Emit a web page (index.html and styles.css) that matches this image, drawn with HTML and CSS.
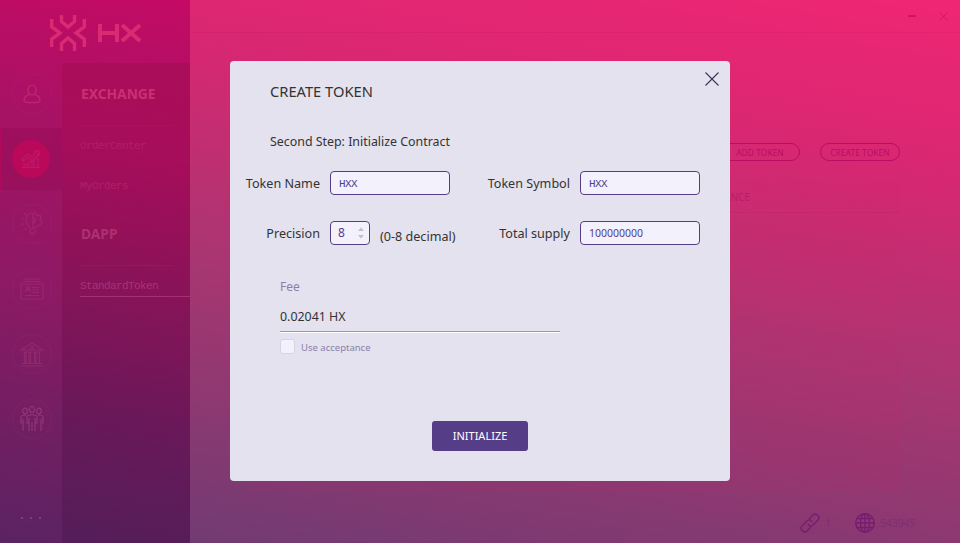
FILE: index.html
```html
<!DOCTYPE html>
<html lang="en">
<head>
<meta charset="utf-8">
<title>HX Wallet</title>
<link rel="stylesheet" href="styles.css">
</head>
<body>
<div class="app">
  <aside class="sidebar">
    <div class="brand">
      <svg class="brand-mark" width="36" height="36" viewBox="0 0 36 36"><path d="M11.500 0v6.500l6.500 5.500 6.500-5.500V0M11.500 36v-7.500l6.500-5.500 6.500 5.500V36M1.700 4v8L10 18l-8.300 6v8M34.300 4v8L26 18l8.300 6v8"/></svg>
      <svg class="brand-name" width="44" height="18" viewBox="0 0 44 18"><path d="M2 0v18M19 0v18M2 9h17M24 1l18 16M42 1L24 17"/></svg>
    </div>
    <div class="menus">
      <nav class="rail">
        <div class="rail-item user"><span class="disc"><svg width="18" height="20" viewBox="0 0 18 20"><ellipse cx="9" cy="6" rx="4" ry="5"/><path d="M6 10.500C3 12 1 13 1 16.500c0 3 16 3 16 0 0-3.500-2-4.500-5-6"/></svg></span></div>
        <div class="rail-item active"><span class="disc"><svg width="20" height="20" viewBox="0 0 20 20"><path d="M.5 18.500h19M3 18v-3h3v3M8 18v-5h3v5M13 18V9h4v9M1 10l6-5 4 3 4-5-2-1h5v5l-1-2-6 7-4-4-5 4z"/></svg></span></div>
        <div class="rail-item"><span class="disc"><svg width="22" height="26" viewBox="0 0 22 26"><path d="M9 18c0-3-4-4-4-9s3-7 7-7h3l1 3 3-1 1 3-1 2 2 2-2 3-3 1c0 2-3 1-3 3zM9 19v3h5v-3M10 24h3M12 2v16M12 7c3 0 3 5 0 5M3 2l2 2M0 8h3M0 13h3M4 19l2-2"/></svg></span></div>
        <div class="rail-item"><span class="disc"><svg width="24" height="22" viewBox="0 0 24 22"><path d="M1 6h22v15H1zM3 3.500h18M4 1h16M5.500 14c0-4 5-4 5 0M7 9h2.500v3H7zM12 9.500h7M12 12h7M12 14.500h7M5 17.500h14"/></svg></span></div>
        <div class="rail-item"><span class="disc"><svg width="24" height="25" viewBox="0 0 24 25"><path d="M1 8l11-7 11 7zM3 10h18M4.500 10v11M9 10v11M14.500 10v11M19.500 10v11" /><path d="M2 21.500h20M0 24h24M12 4a1.500 1.500 0 100 3 1.500 1.500 0 000-3M6 10v11M10.500 10v11M16 10v11"/></svg></span></div>
        <div class="rail-item people"><span class="disc"><svg width="24" height="26" viewBox="0 0 24 26"><ellipse cx="12" cy="3.500" rx="2.500" ry="3"/><ellipse cx="5" cy="5" rx="2.300" ry="2.800"/><ellipse cx="19" cy="5" rx="2.300" ry="2.800"/><path d="M9 25V12v5H7v-6c0-3 10-3 10 0v6h-2v-5 13M12 16v9M3 25V13v4H1v-6c0-2 3-2 5-2M21 25V13v4h2v-6c0-2-3-2-5-2"/></svg></span></div>
        <div class="more"><i></i><i></i><i></i></div>
      </nav>
      <nav class="submenu">
        <h2>EXCHANGE</h2>
        <a>OrderCenter</a>
        <a>MyOrders</a>
        <h2 class="second">DAPP</h2>
        <a class="current">StandardToken</a>
      </nav>
    </div>
  </aside>
  <main class="main">
    <header class="titlebar">
      <svg width="8" height="2" viewBox="0 0 8 2"><path d="M0 1h8"/></svg>
      <svg class="quit" width="9" height="9" viewBox="0 0 9 9"><path d="M.5.5l8 8M8.500.5l-8 8"/></svg>
    </header>
    <div class="actions"><span>ADD TOKEN</span><span>CREATE TOKEN</span></div>
    <section class="table"><div class="table-head">BALANCE</div></section>
    <footer class="status">
      <svg width="20" height="20" viewBox="0 0 20 20"><path d="M9 6l4-4c3-3 8 2 5 5l-5 5c-2 2-4 1-5-1M11 14l-4 4c-3 3-8-2-5-5l5-5c2-2 4-1 5 1"/></svg>
      <span class="peers">1</span>
      <svg width="20" height="20" viewBox="0 0 20 20"><circle cx="10" cy="10" r="9.300"/><ellipse cx="10" cy="10" rx="4.500" ry="9.300"/><path d="M10 1v18M1 10h18M2.500 5.500h15M2.500 14.500h15"/></svg>
      <span class="height">543945</span>
    </footer>
  </main>
</div>
<div class="overlay">
  <section class="dialog">
    <header class="dialog-head">
      <h1>CREATE TOKEN</h1>
      <svg class="close" width="14" height="14" viewBox="0 0 14 14"><path d="M.5.5l13 13M13.500.5l-13 13"/></svg>
    </header>
    <p class="step">Second Step: Initialize Contract</p>
    <div class="form">
      <label>Token Name</label><div class="field">HXX</div>
      <label>Token Symbol</label><div class="field">HXX</div>
      <label>Precision</label>
      <div class="precision">
        <div class="field spin"><span>8</span><svg width="6" height="12" viewBox="0 0 6 12"><path d="M0 4l3-3.500L6 4zM0 8l3 3.500L6 8z"/></svg></div>
        <span class="hint">(0-8 decimal)</span>
      </div>
      <label>Total supply</label><div class="field supply">100000000</div>
    </div>
    <div class="fee">
      <div class="fee-label">Fee</div>
      <div class="fee-value">0.02041 HX</div>
      <div class="accept"><i></i><span>Use acceptance</span></div>
    </div>
    <div class="init">INITIALIZE</div>
  </section>
</div>
</body>
</html>
```
FILE: styles.css
```css
* { box-sizing: border-box; }
body { margin: 0; width: 960px; height: 543px; overflow: hidden; font-family: "Noto Sans", sans-serif; }
h1, h2, p { margin: 0; font-weight: 400; }
svg { fill: none; display: block; flex: none; }
.app { display: flex; height: 543px; }

.sidebar { width: 190px; display: flex; flex-direction: column; background: linear-gradient(190deg, #c40a65 0%, #a81264 24%, #8f1964 52%, #5a2362 100%); }
.brand { height: 63px; display: flex; align-items: flex-start; padding: 15px 0 0 50px; }
.brand svg { stroke: #d92a73; stroke-width: 3.4; }
.brand .brand-name { margin: 9px 0 0 12px; stroke-width: 4; }
.menus { display: flex; flex: 1; }
.rail { width: 62px; display: flex; flex-direction: column; gap: 3px; }
.rail-item { height: 62px; display: flex; align-items: center; justify-content: center; padding-left: 1px; }
.rail-item.active { background: rgba(145, 5, 78, .3); box-shadow: inset 1px 0 0 #b3095d; padding-left: 0; }
.disc { width: 40px; height: 40px; border: 1px solid rgba(205, 80, 140, .09); border-radius: 50%; display: flex; align-items: center; justify-content: center; }
.active .disc { background: #ba085b; border: 0; width: 38px; height: 38px; }
.disc svg { stroke: rgba(210, 95, 150, .2); stroke-width: 1.2; }
.user .disc svg { stroke: #c32872; }
.people .disc svg { stroke: rgba(215, 110, 165, .3); }
.more { display: flex; gap: 7px; padding: 64px 0 0 21px; }
.more i { width: 2px; height: 2px; background: #823c79; }
.submenu { width: 128px; padding-left: 18px; background: linear-gradient(190deg, #ab0d59 0%, #a60d5b 20%, #8a1358 45%, #6b1859 72%, #531e59 100%); }
.submenu h2 { height: 63px; margin-right: 17px; padding: 21px 0 0 1px; font-size: 13.800px; line-height: 19px; font-weight: 700; color: #c93074; border-bottom: 1px solid rgba(190, 30, 110, .25); }
.submenu h2.second { height: 60px; color: #ae3072; padding-top: 18px; }
.submenu a { display: block; height: 40px; font: 11px/40px "Liberation Mono", monospace; letter-spacing: -.6px; color: #b01f68; }
.submenu a.current { height: 31px; color: #ac3173; border-bottom: 1px solid #a52f70; }

.main { flex: 1; display: flex; flex-direction: column; background: linear-gradient(190deg, #f02674 0%, #d92772 25%, #a83671 58%, #713b72 100%); }
.titlebar { height: 33px; border-bottom: 1px solid rgba(195, 15, 100, .18); display: flex; justify-content: flex-end; align-items: center; gap: 23px; padding-right: 12px; stroke: #c00a5b; stroke-width: 1.3; }
.titlebar .quit { stroke: #cf1865; stroke-width: 1; }
.actions { display: flex; justify-content: flex-end; gap: 20px; padding: 110px 60px 0 0; }
.actions span { width: 80px; height: 18px; border: 1px solid #b90d63; border-radius: 9px; font-size: 8.500px; line-height: 18px; text-align: center; color: #b80e63; }
.table { width: 650px; height: 310px; margin: 21px 0 0 60px; background: rgba(215, 40, 105, .06); }
.table-head { height: 31px; padding-left: 456px; font-size: 10px; line-height: 30px; color: rgba(165, 15, 95, .5); border-bottom: 1px solid rgba(170, 20, 100, .15); }
.status { display: flex; align-items: center; justify-content: flex-end; padding: 21px 44px 0 0; font-size: 11px; line-height: 20px; color: #812e73; }
.status svg { stroke: #751d70; stroke-width: 1.4; }
.peers { width: 35px; padding-left: 5px; }
.height { width: 41px; padding-left: 5px; letter-spacing: -.45px; }

.overlay { position: absolute; inset: 0; display: flex; justify-content: center; align-items: flex-start; padding-top: 61px; }
.dialog { width: 500px; height: 420px; border-radius: 4px; background: #e4e2ee; color: #333; }
.dialog-head { height: 62px; display: flex; justify-content: space-between; padding: 11px 11px 0 40px; }
.dialog h1 { margin-top: 9px; font-size: 14.700px; line-height: 20px; }
.close { stroke: #3c305e; stroke-width: 1.1; }
.step { height: 48px; padding: 9px 0 0 40px; font-size: 12.400px; line-height: 20px; }
.form { display: grid; grid-template-columns: 90px 120px 110px 120px; grid-template-rows: 24px 24px; gap: 26px 10px; }
.form label { font-size: 12.600px; line-height: 26px; text-align: right; }
.field { height: 24px; border: 1px solid #553d87; border-radius: 4px; background: #f3f1fb; color: #553d87; padding-left: 8px; font: 11px/25px "Liberation Mono", monospace; letter-spacing: -.6px; }
.supply { font: 10.500px/23px "Noto Sans", sans-serif; letter-spacing: 0; }
.precision { display: flex; gap: 10px; }
.spin { flex: none; width: 40px; display: flex; align-items: center; justify-content: space-between; padding: 0 5px 0 7px; font: 12px/22px "Noto Sans", sans-serif; }
.spin svg { fill: #bfc0d3; }
.hint { font-size: 12.600px; line-height: 31px; white-space: nowrap; }
.fee { width: 280px; margin: 32px 0 0 50px; }
.fee-label { font-size: 12px; line-height: 20px; color: #8a80a8; }
.fee-value { height: 35px; padding-top: 10px; font-size: 12.400px; line-height: 20px; border-bottom: 1px solid #9b9b9f; box-shadow: 0 1px 0 #fff; }
.accept { display: flex; gap: 6px; align-items: center; height: 15px; margin-top: 7px; font-size: 9.500px; line-height: 17px; color: #8a80a8; }
.accept span { padding-top: 2px; }
.accept i { width: 15px; height: 15px; border: 1px solid #d7d3e5; border-radius: 3px; background: #f3f1fb; }
.init { width: 96px; height: 30px; margin: 67px auto 0; border-radius: 3px; background: #553d87; color: #fff; font-size: 11px; line-height: 30px; text-align: center; }
```
